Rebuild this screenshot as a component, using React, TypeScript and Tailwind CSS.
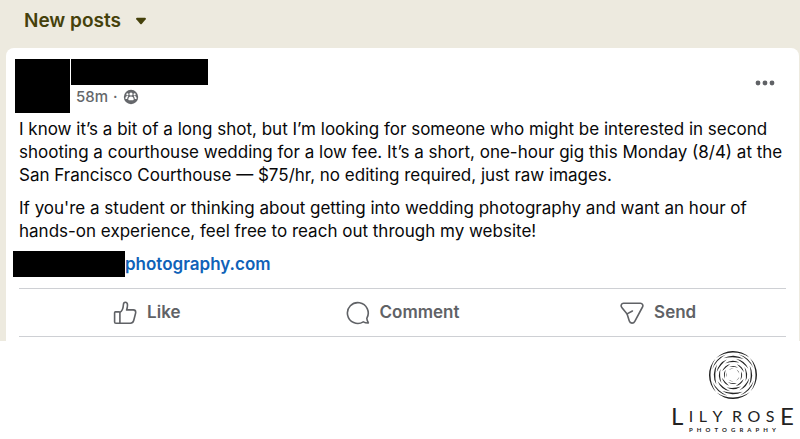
// components/GroupPost.tsx
import { FC, ReactNode } from "react";

const LikeIcon: FC = () => (
  <svg
    className="h-6 w-6"
    viewBox="0 0 24 24"
    fill="none"
    stroke="currentColor"
    strokeWidth="1.6"
    strokeLinejoin="round"
    aria-hidden="true"
  >
    <path d="M2.400 10.900h3.600c.5 0 .9.400.9.900v10.400H2.900c-.8 0-1.300-.5-1.300-1.300v-9.100c0-.6.300-.9.800-.9z" />
    <path d="M6.900 11.400c2.500-1.600 3.300-4.200 3.500-7.700.1-1.500.8-2.400 1.900-2.400 1.400 0 2.200 1.100 2.200 2.700 0 1.700-.3 3.200-.9 4.900h6.800c1.400 0 2.300.9 2.300 2.300 0 .9-.3 1.800-.5 2.600l-1.500 5.700c-.5 1.800-1.500 2.700-3.300 2.700H6.900" />
  </svg>
);

const CommentIcon: FC = () => (
  <svg
    className="h-6 w-6"
    viewBox="0 0 24 24"
    fill="none"
    stroke="currentColor"
    strokeWidth="1.6"
    strokeLinejoin="round"
    aria-hidden="true"
  >
    <path d="M20.800 17.300A10.400 10.400 0 1 0 17.300 20.900c1.300.7 2.900 1.100 4.600 1.100.4 0 .5-.3.300-.6-.7-1.300-1.200-2.600-1.400-4.100z" />
  </svg>
);

const SendIcon: FC = () => (
  <svg
    className="h-6 w-6"
    viewBox="0 0 24 24"
    fill="none"
    stroke="currentColor"
    strokeWidth="1.6"
    strokeLinecap="round"
    strokeLinejoin="round"
    aria-hidden="true"
  >
    <path d="M3.500 2.300h17c1.900 0 3 2 2 3.700l-7.700 14.300c-.6 1.200-1.500 1.800-2.800 1.800s-2.300-.7-2.700-2l-2.200-7.200-5.300-6.500C.4 4.700 1.400 2.300 3.500 2.300z" />
    <path d="M7.100 12.900l5.300-2.900" />
  </svg>
);

const GroupIcon: FC = () => (
  <svg className="h-4 w-4" viewBox="0 0 16 16" aria-hidden="true">
    <circle cx="8" cy="8" r="7.200" fill="#65676b" />
    <g fill="#fff">
      <circle cx="8" cy="5" r="1.600" />
      <circle cx="4.400" cy="5.400" r="1.100" />
      <circle cx="11.600" cy="5.400" r="1.100" />
      <path d="M5.300 10.600c0-2 1-3.200 2.700-3.200s2.700 1.200 2.700 3.200c0 .4-.3.600-.7.600H6c-.4 0-.7-.2-.7-.6z" />
      <path d="M2.400 9.400c0-1.500.7-2.400 1.900-2.400.3 0 .6.100.9.200-.6.700-.9 1.600-1 2.800H2.900c-.3 0-.5-.2-.5-.6zM13.600 9.400c0-1.500-.7-2.400-1.900-2.400-.3 0-.6.100-.9.200.6.700.9 1.600 1 2.800h1.300c.3 0 .5-.2.500-.6z" />
    </g>
  </svg>
);

interface ActionProps {
  label: string;
  icon: ReactNode;
}

const Action: FC<ActionProps> = ({ label, icon }) => (
  <button
    type="button"
    className="flex items-center justify-center gap-2.5 text-[17px] font-semibold text-[#606266] hover:bg-gray-100"
  >
    {icon}
    {label}
  </button>
);

// each ring is a few tapered strokes: [radius, number of strokes, length in degrees, start angle, thickness]
const rings = [
  [24, 4, 88, 135, 1.5],
  [21.6, 4, 56, 15, 0.9],
  [19.2, 4, 64, 60, 1.5],
  [16.6, 4, 58, 10, 1.2],
  [14, 4, 62, 55, 1.1],
  [11.4, 4, 56, 20, 1],
  [9, 4, 60, 65, 0.8],
  [6.6, 5, 46, 15, 0.7],
];

// outer edge follows the ring, inner edge is a flatter arc through the same ends
const crescent = (r: number, start: number, length: number, thickness: number) => {
  const point = (deg: number) => {
    const a = (deg * Math.PI) / 180;
    return `${(25 + r * Math.cos(a)).toFixed(2)} ${(25 + r * Math.sin(a)).toFixed(2)}`;
  };
  const half = ((length / 2) * Math.PI) / 180;
  const chord = r * Math.sin(half);
  const sag = Math.max(r * (1 - Math.cos(half)) - thickness, 0.1);
  const inner = ((chord * chord + sag * sag) / (2 * sag)).toFixed(2);
  return `M${point(start)}A${r} ${r} 0 0 1 ${point(start + length)}A${inner} ${inner} 0 0 0 ${point(start)}z`;
};

const StudioLogo: FC = () => (
  <div className="flex w-[123px] flex-col items-center font-['Lato',sans-serif] text-[#222]">
    <svg className="h-[50px] w-[50px]" viewBox="0 0 50 50" fill="#222" aria-hidden="true">
      {rings.map(([r, count, length, start, thickness]) =>
        Array.from({ length: count }, (_, i) => (
          <path
            key={`${r}-${i}`}
            d={crescent(r, start + (i * 360) / count, length, thickness)}
          />
        ))
      )}
    </svg>
    <div className="mt-1.5 flex w-full items-center justify-between text-[16px] leading-5">
      <span className="text-[24px]">L</span>
      <span>I</span>
      <span>L</span>
      <span>Y</span>
      <span className="ml-1">R</span>
      <span>O</span>
      <span>S</span>
      <span className="text-[24px]">E</span>
    </div>
    <div className="flex w-[87px] justify-between text-[6px] font-bold leading-2">
      {"PHOTOGRAPHY".split("").map((letter, i) => (
        <span key={i}>{letter}</span>
      ))}
    </div>
  </div>
);

const App: FC = () => {
  return (
    <div className="min-h-screen bg-white font-['Inter',sans-serif] text-[#080809]">
      <main className="bg-[#edeadf] pl-1.5 pr-px">
        <div className="flex h-12 items-center pb-1.5 pl-[18px]">
          <button
            type="button"
            className="flex items-center gap-3.5 text-[19px] font-semibold text-[#45410b]"
          >
            New posts
            <svg className="h-2 w-3" viewBox="0 0 12 8" aria-hidden="true">
              <path
                d="M2 .8h8c.8 0 1.200.9.700 1.500L6.700 6.900c-.4.4-1 .4-1.400 0L1.300 2.300C.8 1.700 1.200.8 2 .8z"
                fill="currentColor"
              />
            </svg>
          </button>
        </div>

        <article className="rounded-t-lg bg-white pb-1 pt-[11px]">
          <header className="flex items-start justify-between pl-[9px] pr-6">
            <div className="flex gap-px">
              <div className="h-[54px] w-[55px] bg-black" />
              <div>
                <div className="h-[26px] w-[137px] bg-black" />
                <div className="flex h-6 items-center gap-[5px] pl-[5px] text-[15px] font-medium text-[#65676b]">
                  <span>58m</span>
                  <span>·</span>
                  <GroupIcon />
                </div>
              </div>
            </div>
            <button type="button" aria-label="More" className="mt-3 text-[#606266]">
              <svg className="h-6 w-5" viewBox="0 0 20 24" fill="currentColor" aria-hidden="true">
                <circle cx="3" cy="12" r="2.400" />
                <circle cx="10" cy="12" r="2.400" />
                <circle cx="17" cy="12" r="2.400" />
              </svg>
            </button>
          </header>

          <div className="mt-[5px] flex flex-col gap-2.5 px-[13px] text-[17px] leading-[23px]">
            <p>
              I know it’s a bit of a long shot, but I’m looking for someone who might be interested
              in second shooting a courthouse wedding for a low fee. It’s a short, one-hour gig this
              Monday (8/4) at the San Francisco Courthouse — $75/hr, no editing required, just raw
              images.
            </p>
            <p>
              If you're a student or thinking about getting into wedding photography and want an
              hour of hands-on experience, feel free to reach out through my website!
            </p>
          </div>
          <div className="mt-2 flex items-center pl-[7px] text-[17px] leading-[23px]">
            <div className="h-[26px] w-28 bg-black" />
            <a href="#" className="font-semibold text-[#0f62b8] hover:underline">
              photography.com
            </a>
          </div>

          <div className="mx-[13px] mt-[11px] grid h-[49px] grid-cols-3 border-y border-[#ced0d4]">
            <Action label="Like" icon={<LikeIcon />} />
            <Action label="Comment" icon={<CommentIcon />} />
            <Action label="Send" icon={<SendIcon />} />
          </div>
        </article>
      </main>

      <footer className="flex justify-end pr-1.5 pt-[9px]">
        <StudioLogo />
      </footer>
    </div>
  );
};

export default App;
